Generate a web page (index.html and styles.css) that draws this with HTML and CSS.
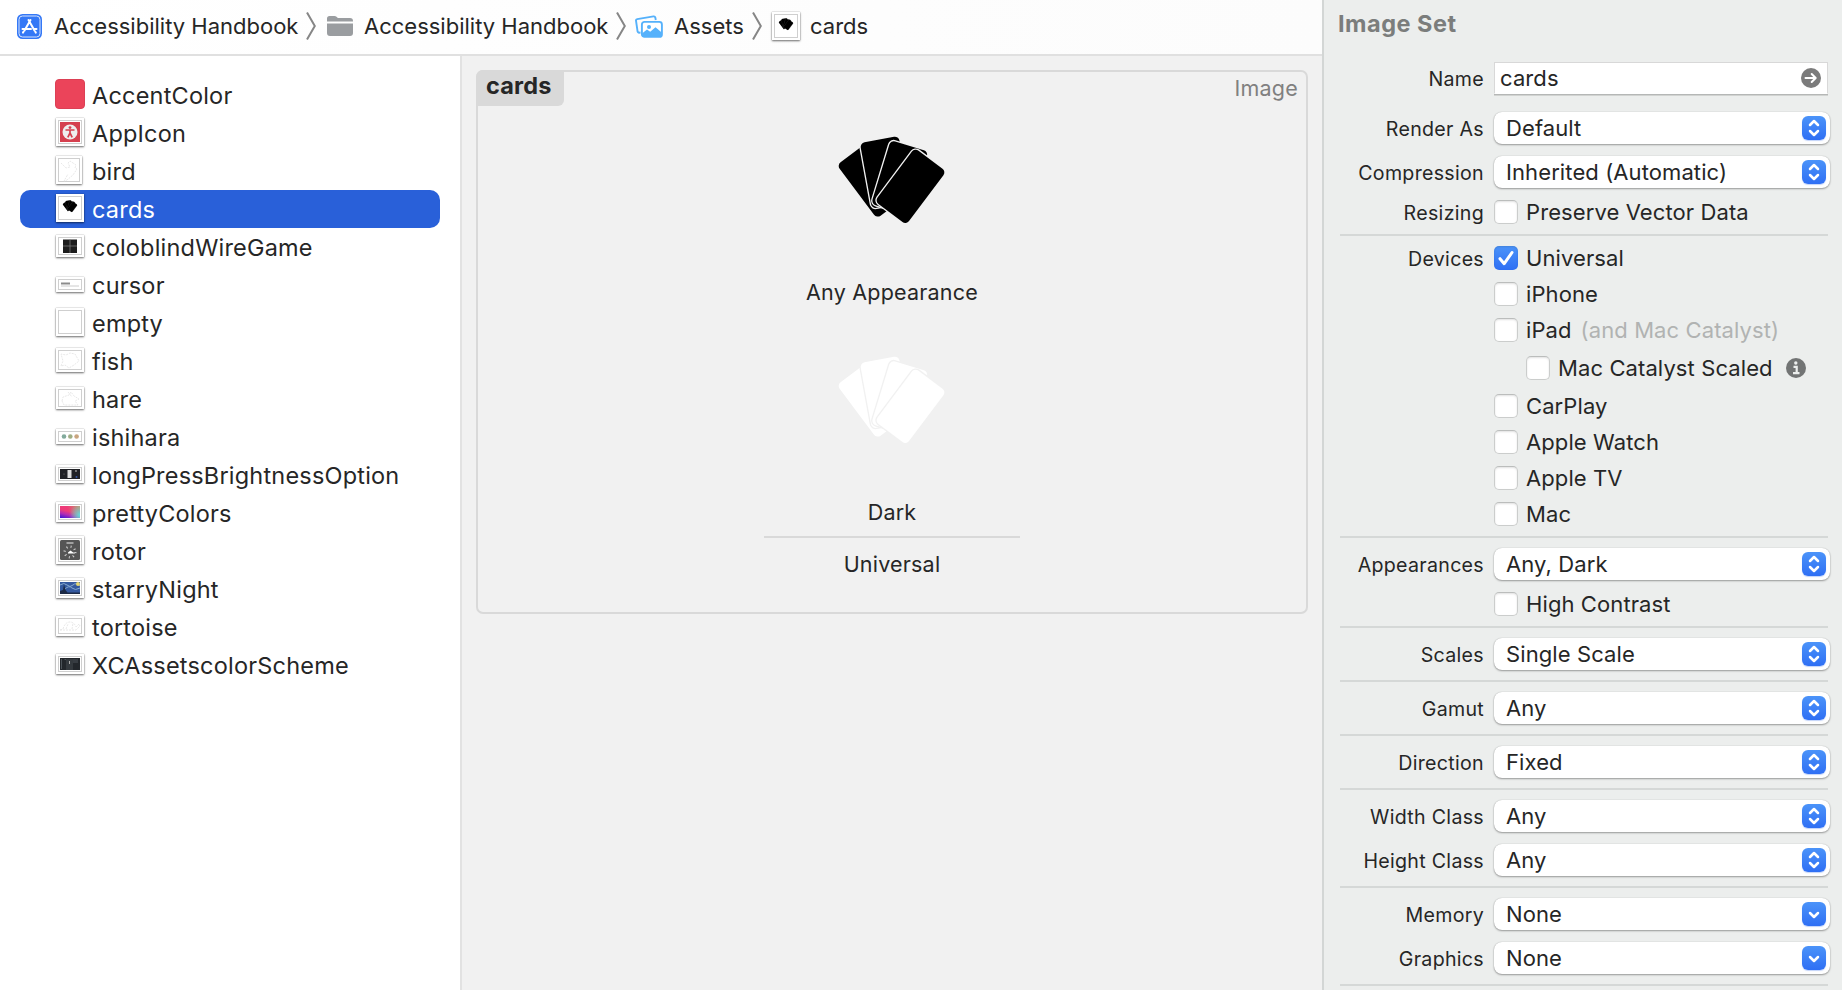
FILE: index.html
```html
<!DOCTYPE html>
<html lang="en">
<head>
<meta charset="utf-8">
<title>Assets</title>
<link rel="stylesheet" href="styles.css">
</head>
<body>
<svg class="defs" width="0" height="0">
  <defs>
    <symbol id="cards" viewBox="174 75 330 270">
      <g stroke-width="8" paint-order="stroke">
        <rect x="221.700" y="110" width="118" height="200" rx="14" transform="rotate(-36.87 280.7 210)" stroke="none"/>
        <rect x="259.700" y="87" width="118" height="200" rx="14" transform="rotate(-10.3 318.7 187)"/>
        <rect x="303.300" y="103" width="118" height="200" rx="14" transform="rotate(17 362.3 203)"/>
        <rect x="335.500" y="129" width="118" height="200" rx="14" transform="rotate(36.87 394.5 229)"/>
      </g>
    </symbol>
    <symbol id="updown" viewBox="0 0 24 24"><path d="M8 9l4-4 4 4M8 15l4 4 4-4" fill="none" stroke="#fff" stroke-width="2.500" stroke-linecap="round" stroke-linejoin="round"/></symbol>
    <symbol id="down" viewBox="0 0 24 24"><path d="M8 11l4 4 4-4" fill="none" stroke="#fff" stroke-width="2.500" stroke-linecap="round" stroke-linejoin="round"/></symbol>
    <symbol id="sep" viewBox="0 0 10 28"><path d="M1 .5L8.800 14 1 27.500" fill="none" stroke="#868686" stroke-width="2"/></symbol>
  </defs>
</svg>
<div class="window">
  <div class="workspace">
    <nav class="path">
      <svg class="app" viewBox="0 0 25 25"><rect width="25" height="25" rx="5.500" fill="#3478f6"/><rect x="2" y="2" width="21" height="21" rx="3.500" fill="none" stroke="#d5e3fd" stroke-width="1"/><path d="M13.500 6L7.500 16.500M11.500 6l6 10.500M5.500 15h8.500M16.500 15h3M6.500 17.700l-.5.900M18.300 17.700l.5.900" stroke="#fff" stroke-width="2" stroke-linecap="round" fill="none"/></svg>
      <span class="t1">Accessibility Handbook</span>
      <svg class="chev c1"><use href="#sep"/></svg>
      <svg class="folder" viewBox="0 0 26 20"><path d="M0 5.500V2.500Q0 0 2.500 0h5q1.200 0 2 .8l.8.700q.5.500 1.500.500H23q3 0 3 3v.5zM0 7.500h26V17q0 3-3 3H3q-3 0-3-3z" fill="#9a9da0"/></svg>
      <span class="t2">Accessibility Handbook</span>
      <svg class="chev c2"><use href="#sep"/></svg>
      <svg class="photos" viewBox="0 0 28 23"><path d="M5.500 17.500L4 17.700Q2.900 17.800 2.600 16.600L1 5.700Q.8 4.400 2.200 4.100L18.500 1.400Q20 1.200 20.300 2.500l.5 2.500" fill="none" stroke="#55b1fb" stroke-width="1.900"/><rect x="6.900" y="6.900" width="20" height="15" rx="2.500" fill="#fff" stroke="#55b1fb" stroke-width="1.900"/><path d="M7 18.500l5-4 3.200 2.300 5.300-4.500 6.500 5.400V22H7z" fill="#55b1fb"/><circle cx="14" cy="12" r="2" fill="#55b1fb"/></svg>
      <span class="t3">Assets</span>
      <svg class="chev c3"><use href="#sep"/></svg>
      <span class="thumb t28 crumb"><svg viewBox="0 0 28 28"><use href="#cards" x="6.500" y="6" width="15" height="12.300" fill="#000" stroke="#555"/></svg></span>
      <span class="t4">cards</span>
    </nav>
    <div class="split">
      <ul class="assets">
        <li><i><b class="swatch"></b></i><span>AccentColor</span></li>
        <li><i><b class="thumb t28"><svg viewBox="0 0 28 28"><rect x="4" y="4" width="20" height="20" fill="#d5404f"/><circle cx="14" cy="14" r="7.500" fill="#eee"/><circle cx="14" cy="9.600" r="1.400" fill="#d5404f"/><path d="M9.500 12h9M14 12v3.500M14 15l-2.200 4.300M14 15l2.200 4.300" stroke="#d5404f" stroke-width="1.700" fill="none"/></svg></b></i><span>AppIcon</span></li>
        <li><i><b class="thumb t28 slim"><svg viewBox="0 0 26 28"><path d="M5 7l5 5 4-1-2-4 2-2 6 4-1 3 2 1-4 6-6 5-3 1 4-7" fill="none" stroke="#e2e2e2" stroke-width=".8" stroke-dasharray="2 1"/></svg></b></i><span>bird</span></li>
        <li class="on"><i><b class="thumb t28"><svg viewBox="0 0 28 28"><use href="#cards" x="6.500" y="6" width="15" height="12.300" fill="#000" stroke="#555"/></svg></b></i><span>cards</span></li>
        <li><i><b class="thumb t22"><svg viewBox="0 0 28 22"><rect x="7" y="4.500" width="14" height="13.500" fill="#1c1c1c"/><path d="M14 4.500V18M7 11h14" stroke="#777" stroke-width=".8"/></svg></b></i><span>coloblindWireGame</span></li>
        <li><i><b class="thumb t15"><svg viewBox="0 0 28 15"><path d="M5 6.500h9" stroke="#8c8c8c" stroke-width="2"/><path d="M5 9h18" stroke="#ccc"/></svg></b></i><span>cursor</span></li>
        <li><i><b class="thumb t28"></b></i><span>empty</span></li>
        <li><i><b class="thumb t24"><svg viewBox="0 0 28 24"><path d="M5 18l2-5-2-7 5 1 4-2 5 1 4 7-5 4-5 3-4-3-4 1" fill="none" stroke="#e2e2e2" stroke-width=".8" stroke-dasharray="2 1"/></svg></b></i><span>fish</span></li>
        <li><i><b class="thumb t22"><svg viewBox="0 0 28 22"><path d="M6 14l1-4 6-2 2-3 3 4 5 3-4 2 3 4H8zM12 5l4 5" fill="none" stroke="#e2e2e2" stroke-width=".8" stroke-dasharray="2 1"/></svg></b></i><span>hare</span></li>
        <li><i><b class="thumb t15"><svg viewBox="0 0 28 15"><circle cx="8" cy="7.500" r="2.300" fill="#82aa9c"/><circle cx="14.300" cy="7.500" r="2.300" fill="#9fae84"/><circle cx="20.600" cy="7.500" r="2.300" fill="#c9a57f"/></svg></b></i><span>ishihara</span></li>
        <li><i><b class="thumb t18"><svg viewBox="0 0 28 18"><rect x="4" y="4" width="20" height="10" fill="#202125"/><rect x="11.500" y="5" width="4" height="8" fill="#ddd"/><circle cx="20" cy="6" r=".9" fill="#999"/><circle cx="20.500" cy="12" r="1" fill="#3455a5"/><circle cx="8" cy="9" r=".6" fill="#777"/></svg></b></i><span>longPressBrightnessOption</span></li>
        <li><i><b class="thumb t20"><em class="pretty"></em></b></i><span>prettyColors</span></li>
        <li><i><b class="thumb t28"><svg viewBox="0 0 28 28"><rect x="4" y="4" width="20" height="20" rx="1.500" fill="#555"/><path d="M10.500 7h7" stroke="#bbb" stroke-width="1.500"/><circle cx="14" cy="16" r="5.300" fill="none" stroke="#ccc" stroke-width="2.400" stroke-dasharray="1 3.160"/><path d="M12 16.500l2.500-2 2 1.500 3 1.500H12z" fill="#fff"/></svg></b></i><span>rotor</span></li>
        <li><i><b class="thumb t20"><svg viewBox="0 0 28 20"><rect x="4" y="4" width="20" height="12" fill="#34599f"/><path d="M4 7q4-3 7 0t6 0 7 1M9 11q4-4 7-1t8 0" stroke="#86a9cd" fill="none"/><circle cx="22" cy="6" r="2" fill="#e4d673"/><path d="M4 16v-3l3-1 1-6 1.500 6 2 2.500 12.500 0v1.500z" fill="#1b2945"/></svg></b></i><span>starryNight</span></li>
        <li><i><b class="thumb t20"><svg viewBox="0 0 28 20"><path d="M4 14l3-1q2-7 7-7 4 0 6 5l3-3 1 2-4 4H8zM10 13l2-5M16 13l1-6" fill="none" stroke="#e2e2e2" stroke-width=".8" stroke-dasharray="2 1"/></svg></b></i><span>tortoise</span></li>
        <li><i><b class="thumb t20"><svg viewBox="0 0 28 20"><rect x="4" y="4" width="20" height="12" fill="#23272c"/><path d="M5.500 5v10M8.500 5.500h4M17 6h5M17 8h5" stroke="#4c5359"/><rect x="10" y="5" width="7" height="11" fill="#34393e"/><path d="M13.500 7v3" stroke="#aaa"/></svg></b></i><span>XCAssetscolorScheme</span></li>
      </ul>
      <main class="canvas">
        <section class="set">
          <header><h1>cards</h1><span>Image</span></header>
          <figure><svg class="art"><use href="#cards" fill="#000" stroke="#f1f1f1"/></svg><figcaption class="any">Any Appearance</figcaption></figure>
          <figure><svg class="art"><use href="#cards" fill="#fff" stroke="#f1f1f1"/></svg><figcaption>Dark</figcaption></figure>
          <p class="idiom">Universal</p>
        </section>
      </main>
    </div>
  </div>
  <aside class="inspector">
    <h2>Image Set</h2>
    <section class="first">
      <div class="row name"><label>Name</label><div class="field">cards<svg viewBox="0 0 20 20"><circle cx="10" cy="10" r="10" fill="#7b7b7b"/><path d="M4.500 10h10M10.700 6l4 4-4 4" fill="none" stroke="#fff" stroke-width="2" stroke-linecap="round" stroke-linejoin="round"/></svg></div></div>
      <div class="row"><label>Render As</label><div class="select">Default<svg><use href="#updown"/></svg></div></div>
      <div class="row"><label>Compression</label><div class="select">Inherited (Automatic)<svg><use href="#updown"/></svg></div></div>
      <div class="row check"><label>Resizing</label><b class="box"></b><span>Preserve Vector Data</span></div>
    </section>
    <section class="devices">
      <div class="row check"><label>Devices</label><b class="box checked"><svg viewBox="0 0 24 24"><path d="M6 12.700l4.200 5L18 6.500" fill="none" stroke="#fff" stroke-width="3" stroke-linecap="round" stroke-linejoin="round"/></svg></b><span>Universal</span></div>
      <div class="row check"><label></label><b class="box"></b><span>iPhone</span></div>
      <div class="row check"><label></label><b class="box"></b><span>iPad</span><span class="hint">(and Mac Catalyst)</span></div>
      <div class="row check nested"><label></label><b class="box"></b><span>Mac Catalyst Scaled</span><svg class="info" viewBox="0 0 20 20"><circle cx="10" cy="10" r="10" fill="#727474"/><circle cx="9.800" cy="5" r="1.700" fill="#eceeed"/><path d="M7.500 8.900h3.200v5.800M7 15.200h6.500" fill="none" stroke="#eceeed" stroke-width="2.200"/></svg></div>
      <div class="row check"><label></label><b class="box"></b><span>CarPlay</span></div>
      <div class="row check"><label></label><b class="box"></b><span>Apple Watch</span></div>
      <div class="row check"><label></label><b class="box"></b><span>Apple TV</span></div>
      <div class="row check"><label></label><b class="box"></b><span>Mac</span></div>
    </section>
    <section>
      <div class="row"><label>Appearances</label><div class="select">Any, Dark<svg><use href="#updown"/></svg></div></div>
      <div class="row check"><label></label><b class="box"></b><span>High Contrast</span></div>
    </section>
    <section><div class="row"><label>Scales</label><div class="select">Single Scale<svg><use href="#updown"/></svg></div></div></section>
    <section><div class="row"><label>Gamut</label><div class="select">Any<svg><use href="#updown"/></svg></div></div></section>
    <section><div class="row"><label>Direction</label><div class="select">Fixed<svg><use href="#updown"/></svg></div></div></section>
    <section>
      <div class="row"><label>Width Class</label><div class="select">Any<svg><use href="#updown"/></svg></div></div>
      <div class="row"><label>Height Class</label><div class="select">Any<svg><use href="#updown"/></svg></div></div>
    </section>
    <section>
      <div class="row"><label>Memory</label><div class="select">None<svg><use href="#down"/></svg></div></div>
      <div class="row"><label>Graphics</label><div class="select">None<svg><use href="#down"/></svg></div></div>
    </section>
  </aside>
</div>
</body>
</html>
```
FILE: styles.css
```css
* { box-sizing: border-box; margin: 0; padding: 0; }
body { width: 1842px; height: 990px; overflow: hidden; background: #fff; color: #262626; font-family: Inter, sans-serif; font-size: 22px; white-space: nowrap; }
svg { display: block; flex: none; }
.defs { position: absolute; }
i, em { font-style: normal; }
.window { display: flex; height: 990px; }
.workspace { width: 1322px; flex: none; display: flex; flex-direction: column; }

/* Jump bar */
.path { height: 56px; border-bottom: 2px solid #e0e0e0; display: flex; align-items: center; padding: 0 0 2px 17px; background: linear-gradient(90deg, #fff, #fcfcfc); font-size: 22px; }
.path span { flex: none; }
.app { width: 25px; height: 25px; margin-right: 12px; }
.t1 { width: 252px; }
.chev { width: 10px; height: 28px; }
.c1 { margin-right: 11px; }
.folder { width: 26px; height: 20px; margin-right: 11px; }
.t2 { width: 252px; }
.c2 { margin-right: 9px; }
.photos { width: 28px; height: 23px; margin-right: 11px; }
.t3 { width: 78px; }
.c3 { margin-right: 10px; }
.crumb { margin-right: 10px; }

.split { flex: 1; display: flex; min-height: 0; }

/* Asset list */
.assets { list-style: none; width: 460px; flex: none; padding: 20px 20px 0; font-size: 23.500px; letter-spacing: .2px; }
.assets li { height: 38px; display: flex; align-items: center; padding-left: 35px; border-radius: 10px; }
.assets i { width: 37px; padding: 0 0 2px 1px; }
.assets .on { background: #2960d9; color: #fff; }
.swatch { display: block; width: 30px; height: 30px; margin-left: -1px; border-radius: 4px; background: #eb445a; border: 1px solid #dc4055; }
.thumb { display: block; position: relative; width: 28px; background: #fff; box-shadow: 0 1px 2px rgba(0,0,0,.55), 0 0 1px rgba(0,0,0,.35); }
.thumb::before { content: ""; position: absolute; inset: 2px; border: 1px solid #cfcfcf; }
.thumb svg { position: relative; width: 100%; height: 100%; }
.t28 { height: 28px; }
.t24 { height: 24px; }
.t22 { height: 22px; }
.t20 { height: 20px; }
.t18 { height: 18px; }
.t15 { height: 15px; }
.slim { width: 26px; }
.pretty { position: absolute; inset: 4px; background: radial-gradient(circle at 100% 75%, #5ee0dc, transparent 50%), radial-gradient(circle at 100% 0, #c59a69, transparent 55%), linear-gradient(15deg, #3412d8, #b42bb3 30%, #ee3a78 52%); }

/* Editor */
.canvas { flex: 1; border-left: 2px solid #e2e2e2; background: #f1f1f1; padding: 14px; }
.set { width: 832px; height: 544px; border: 2px solid #d9d9d9; border-radius: 7px; display: flex; flex-direction: column; align-items: center; }
.set header { align-self: stretch; height: 34px; display: flex; justify-content: space-between; }
.set h1 { width: 88px; height: 36px; margin: -2px 0 0 -2px; padding-left: 10px; border-radius: 7px 0 6px 0; background: #d9d9d9; font-size: 23.500px; letter-spacing: .2px; line-height: 31px; }
.set header span { padding-right: 8px; line-height: 33px; color: #808080; font-size: 21.500px; letter-spacing: .2px; }
figure { height: 220px; display: flex; flex-direction: column; align-items: center; padding-top: 29px; font-size: 21.500px; letter-spacing: .2px; }
.art { width: 110px; height: 90px; }
figcaption { margin-top: 53px; line-height: 28px; }
.idiom { width: 256px; margin-top: -10px; border-top: 2px solid #d9d9d9; padding-top: 12px; text-align: center; line-height: 28px; font-size: 21.500px; letter-spacing: .2px; }

/* Inspector */
.inspector { flex: 1; border-left: 2px solid #d3d6d5; background: #eceeed; padding: 0 12px 0 16px; letter-spacing: .1px; }
h2 { height: 52px; line-height: 47px; margin-left: -2px; font-size: 23.500px; letter-spacing: .5px; color: #7b7d7c; }
.inspector section { width: 490px; padding: 10px 0 12px; display: flex; flex-direction: column; gap: 12px; background: linear-gradient(#d5d8d7, #d5d8d7) 0 100% / 488px 2px no-repeat; }
.row { height: 32px; display: flex; align-items: center; }
.row label { width: 144px; margin-right: 10px; text-align: right; font-size: 19.600px; letter-spacing: .3px; padding-top: 1px; }
.name { margin-bottom: 6px; }
.field { width: 334px; height: 32px; display: flex; align-items: center; justify-content: space-between; padding: 0 6px 0 5px; background: #fff; border: 1px solid #d8d8d8; border-bottom-color: #fff; box-shadow: 0 1.500px 0 #b5b7b6; }
.field svg { width: 20px; height: 20px; }
.select { width: 336px; height: 32px; display: flex; align-items: center; justify-content: space-between; padding: 0 4px 0 12px; background: #fff; border-radius: 8px; box-shadow: 0 1px 2px rgba(0,0,0,.35), 0 0 1px rgba(0,0,0,.25); }
.select svg { width: 24px; height: 24px; border-radius: 6px; background: linear-gradient(#4b93f9, #2f6ff4); box-shadow: 0 1px 1px rgba(50,110,240,.3); }
.check { height: 24px; }
.check span { margin-left: 8px; }
.box { width: 24px; height: 24px; border-radius: 5px; background: #fff; border: 1px solid #cbcdcc; border-top-color: #bbbdbc; box-shadow: inset 0 1px 2px rgba(0,0,0,.12); }
.checked { border: 0; background: linear-gradient(#4b93f9, #2f6ff4); }
.checked svg { width: 24px; height: 24px; }
.check .hint { color: #b1b3b2; margin-left: 9px; }
.nested { margin: 2px 0; padding-left: 32px; }
.info { width: 20px; height: 20px; margin-left: 13px; }
```
